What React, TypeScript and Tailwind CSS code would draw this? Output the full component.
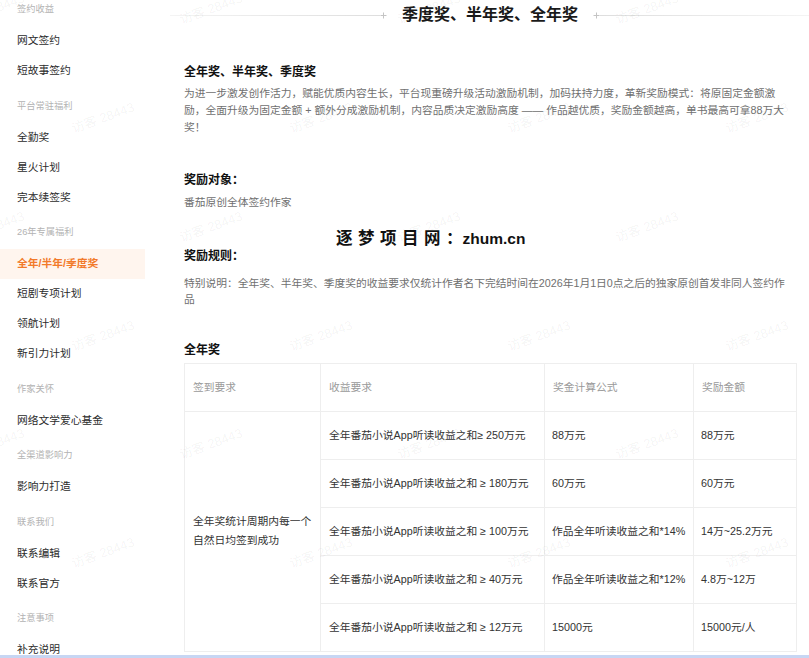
import React from "react";

const groups = [
  { title: "签约收益", items: ["网文签约", "短故事签约"] },
  { title: "平台常驻福利", items: ["全勤奖", "星火计划", "完本续签奖"] },
  { title: "26年专属福利", items: ["全年/半年/季度奖", "短剧专项计划", "领航计划", "新引力计划"] },
  { title: "作家关怀", items: ["网络文学爱心基金"] },
  { title: "全渠道影响力", items: ["影响力打造"] },
  { title: "联系我们", items: ["联系编辑", "联系官方"] },
  { title: "注意事项", items: ["补充说明"] },
];

const rows = [
  ["全年番茄小说App听读收益之和≥ 250万元", "88万元", "88万元"],
  ["全年番茄小说App听读收益之和 ≥ 180万元", "60万元", "60万元"],
  ["全年番茄小说App听读收益之和 ≥ 100万元", "作品全年听读收益之和*14%", "14万~25.2万元"],
  ["全年番茄小说App听读收益之和 ≥ 40万元", "作品全年听读收益之和*12%", "4.8万~12万"],
  ["全年番茄小说App听读收益之和 ≥ 12万元", "15000元", "15000元/人"],
];

// faint "访客" watermark lattice
const marks: { x: number; y: number }[] = [];
[9, 118, 227, 336, 444, 553].forEach((y, i) => {
  const start = i % 2 === 0 ? -7 : 103;
  for (let x = start; x < 860; x += 218) marks.push({ x, y });
});

function Plus() {
  return (
    <svg width="7" height="7" viewBox="0 0 7 7" className="shrink-0">
      <path d="M3.5 0.5v6M0.5 3.5h6" stroke="#c4c4c4" strokeWidth="1" />
    </svg>
  );
}

function Sidebar() {
  return (
    <aside className="w-[165px] shrink-0 mt-[-5.5px]">
      {groups.map((g, gi) => (
        <div key={g.title} className={gi > 0 ? "mt-[5.5px]" : ""}>
          <div className="h-[31px] flex items-center pl-[17px] text-[9.25px] text-[#b3b3b3]">{g.title}</div>
          {g.items.map((it) => {
            const active = it === "全年/半年/季度奖";
            return (
              <div
                key={it}
                className={`h-[30px] w-[145px] flex items-center pl-[17px] text-[10.75px] ${
                  active ? "bg-[#fff5ee] text-[#f27a2a] font-semibold" : "text-[#2b2b2b]"
                }`}
              >
                {it}
              </div>
            );
          })}
        </div>
      ))}
    </aside>
  );
}

function AwardTable() {
  return (
    <table className="mt-[4px] w-[612px] table-fixed border-collapse text-[10.75px]">
      <colgroup>
        <col className="w-[136px]" />
        <col className="w-[224px]" />
        <col className="w-[149px]" />
        <col className="w-[103px]" />
      </colgroup>
      <thead>
        <tr className="h-[48px] text-[#9a9a9a]">
          <th className="border border-[#eeeeee] pl-2 text-left font-normal">签到要求</th>
          <th className="border border-[#eeeeee] pl-2 text-left font-normal">收益要求</th>
          <th className="border border-[#eeeeee] pl-2 text-left font-normal">奖金计算公式</th>
          <th className="border border-[#eeeeee] pl-2 text-left font-normal">奖励金额</th>
        </tr>
      </thead>
      <tbody className="text-[#333]">
        {rows.map((r, i) => (
          <tr key={i} className="h-[48px]">
            {i === 0 && (
              <td rowSpan={5} className="border border-[#eeeeee] pl-2 pr-1 leading-[19px] align-middle">
                全年奖统计周期内每一个自然日均签到成功
              </td>
            )}
            <td className="border border-[#eeeeee] pl-2 pr-1 whitespace-nowrap">{r[0]}</td>
            <td className="border border-[#eeeeee] pl-[7px] pr-0 whitespace-nowrap">{r[1]}</td>
            <td className="border border-[#eeeeee] pl-[7px] pr-0 whitespace-nowrap">{r[2]}</td>
          </tr>
        ))}
      </tbody>
    </table>
  );
}

export default function App() {
  return (
    <div className="relative w-[809px] h-[658px] overflow-hidden bg-white flex flex-col font-['Liberation_Sans','Noto_Sans_CJK_SC',sans-serif]">
      <div className="flex flex-1 min-h-0 overflow-hidden">
        <Sidebar />

        <main className="flex-1 pl-[19px] pr-[13px]">
          {/* Title */}
          <div className="h-[30px] -ml-[14px] -mr-[13px] flex items-center">
            <span className="flex-1 h-px bg-linear-to-r from-[#f4f4f4] to-[#dedede]" />
            <Plus />
            <h1 className="mx-[15px] text-[16px] leading-none font-bold text-[#1a1a1a]">季度奖、半年奖、全年奖</h1>
            <Plus />
            <span className="flex-1 h-px bg-linear-to-r from-[#dedede] to-[#f4f4f4]" />
          </div>

          <h2 className="mt-[33px] text-[12px] leading-[18px] font-bold text-[#111]">全年奖、半年奖、季度奖</h2>
          <p className="mt-[4px] text-[10.75px] leading-[16.8px] text-[#707070]">
            为进一步激发创作活力，赋能优质内容生长，平台现重磅升级活动激励机制，加码扶持力度，革新奖励模式：将原固定金额激
            <br />
            励，全面升级为固定金额 + 额外分成激励机制，内容品质决定激励高度 —— 作品越优质，奖励金额越高，单书最高可拿88万大
            <br />
            奖！
          </p>

          <h2 className="mt-[36px] text-[12px] leading-[18px] font-bold text-[#111]">奖励对象：</h2>
          <p className="mt-[5px] text-[10.75px] leading-[16.6px] text-[#707070]">番茄原创全体签约作家</p>

          <h2 className="mt-[36px] text-[12px] leading-[18px] font-bold text-[#111]">奖励规则：</h2>
          <p className="mt-[10px] text-[10.75px] leading-[16px] text-[#707070]">
            特别说明：全年奖、半年奖、季度奖的收益要求仅统计作者名下完结时间在2026年1月1日0点之后的独家原创首发非同人签约作
            <br />
            品
          </p>

          <h2 className="mt-[34px] text-[12px] leading-[18px] font-bold text-[#111]">全年奖</h2>
          <AwardTable />
        </main>
      </div>

      <div className="h-[3px] shrink-0 bg-[#c7d6f3]" />

      {/* watermarks */}
      {marks.map((m, i) => (
        <span
          key={i}
          className="pointer-events-none absolute -translate-x-1/2 -translate-y-1/2 -rotate-[20deg] whitespace-nowrap text-[13px] text-[rgba(0,0,0,0.055)]"
          style={{ left: m.x, top: m.y }}
        >
          访客 28443
        </span>
      ))}
      <div className="pointer-events-none absolute left-[336px] top-[226px] flex items-center text-[16.5px] font-bold text-[#111]">
        <span className="tracking-[5.5px]">逐梦项目网</span>
        <span>：</span>
        <span className="text-[15.5px]">zhum.cn</span>
      </div>
    </div>
  );
}
